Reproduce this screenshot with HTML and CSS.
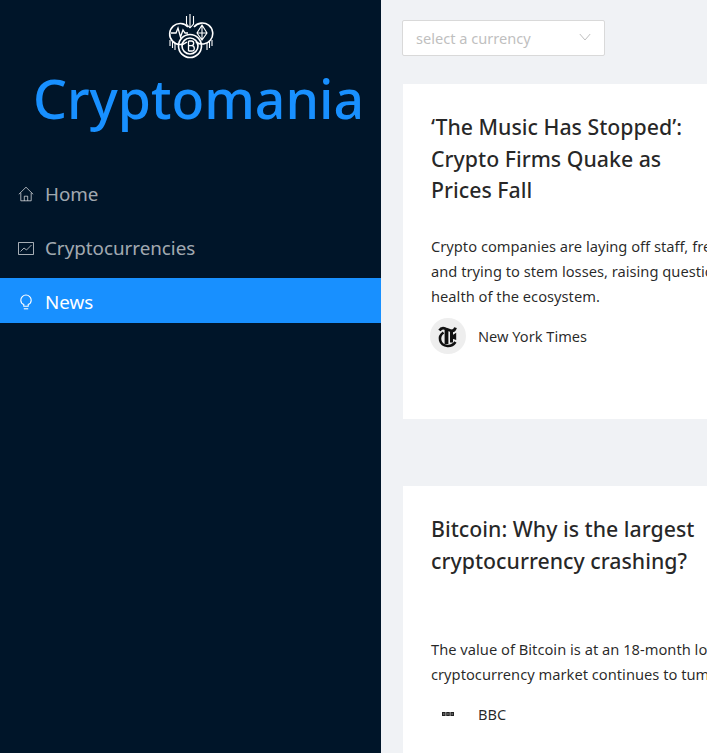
FILE: index.html
```html
<!DOCTYPE html>
<html lang="en">
  <head>
    <meta charset="UTF-8" />
    <meta name="viewport" content="width=device-width, initial-scale=1.0" />
    <title>Cryptomania</title>
    <link rel="stylesheet" href="styles.css">
  </head>
  <body>
    <aside class="sidebar">
      <div class="logo-wrap">
        <svg class="logo" viewBox="0 0 46 46" fill="none" stroke="#fff" stroke-width="1.6">
          <path d="M19 29A10.500 10.500 0 1 1 20 14" />
          <path d="M26 14A10.500 10.500 0 1 1 28 29" />
          <circle cx="22" cy="33" r="11.500" />
          <circle cx="22" cy="33" r="8" />
          <path d="M3 20h5l2-5 2.500 9 2.500-7 2 3h3" stroke-width="1.300" />
          <path d="M34 12l-5 8 5 7 5-7zM29 20h10M34 12v15" stroke-width="1.100" />
          <path d="M22 1v14M18.500 3v8l3.500 4M25.500 3v8l-3.500 4" stroke-width="1.100" />
          <path d="M20.500 28v10M20.500 28h3q2.200 0 2.200 2.300t-2.200 2.400h-3M23.500 32.700q2.800 0 2.800 2.700t-2.800 2.600h-3" stroke-width="1.300" />
          <path d="M2 27v6M4.500 29v6M7 30v7M44 27v6M41.500 29v6M39 30v7" stroke-width="1.100" />
        </svg>
        <h1 class="brand">Cryptomania</h1>
      </div>
      <ul class="menu">
        <li class="menu-item">
          <svg class="menu-icon" viewBox="0 0 16 16" fill="none" stroke="currentColor" stroke-width="1">
            <path d="M.8 8.300 8 1.200l7.200 7.100M2.800 6.800v8h10.400v-8M6.300 14.800v-4.600h3.400v4.600" />
          </svg>
          <span>Home</span>
        </li>
        <li class="menu-item">
          <svg class="menu-icon" viewBox="0 0 16 16" fill="none" stroke="currentColor" stroke-width="1">
            <path d="M.5 2.500h15v12H.5zM2.500 11.500l3.500-3.500 2.500 2 5-5" />
          </svg>
          <span>Cryptocurrencies</span>
        </li>
        <li class="menu-item active">
          <svg class="menu-icon" viewBox="0 0 16 16" fill="none" stroke="currentColor" stroke-width="1.100">
            <path d="M5.800 12.300v-1.700C3.900 9.700 2.800 8 2.800 6.200a5.200 5.200 0 0 1 10.400 0c0 1.800-1.100 3.500-3 4.400v1.700z" />
            <path d="M5.800 14.800h4.400" />
          </svg>
          <span>News</span>
        </li>
      </ul>
    </aside>

    <main class="main">
      <div class="select">
        <span class="select-text">select a currency</span>
        <svg class="select-arrow" viewBox="0 0 12 8" fill="none" stroke="currentColor" stroke-width="1">
          <path d="M.8 1l5.200 6 5.200-6" />
        </svg>
      </div>

      <article class="card card-first">
        <h2 class="card-title">‘The Music Has Stopped’: Crypto Firms Quake as Prices Fall</h2>
        <p class="card-text">Crypto companies are laying off staff, freezing hiring and trying to stem losses, raising questions about the health of the ecosystem.</p>
        <div class="provider">
          <span class="avatar">
            <svg viewBox="0 0 36 36" width="36" height="36" fill="none" stroke="#111">
              <path d="M9.500 12.500q2-3.500 6-1.800l5.500 2q3.500.8 4.500-3" stroke-width="2.800" />
              <path d="M16.500 12v14" stroke-width="3.800" />
              <path d="M13.500 14.500q-4.500 3-3.300 8 1.300 5 7.300 5.500 5 .3 8-4" stroke-width="2.600" />
              <path d="M21.500 13v11.500" stroke-width="3" />
              <path d="M21.500 18.500l4-2.500v5l-4-1.500" fill="#111" stroke-width="1.400" />
            </svg>
          </span>
          <span class="provider-name">New York Times</span>
        </div>
      </article>

      <article class="card">
        <h2 class="card-title">Bitcoin: Why is the largest cryptocurrency crashing?</h2>
        <p class="card-text card-text-short">The value of Bitcoin is at an 18-month low as the cryptocurrency market continues to tumble.</p>
        <div class="provider">
          <span class="avatar avatar-plain">
            <svg viewBox="0 0 12 4" width="12" height="4">
              <path fill="#222" d="M0 0h3.600v4H0zM4.200 0h3.600v4H4.200zM8.400 0H12v4H8.400z" />
              <path fill="#999" d="M1 1.500h1.500v1H1zM5.200 1.500h1.500v1H5.200zM9.500 1.500H11v1H9.500z" />
            </svg>
          </span>
          <span class="provider-name">BBC</span>
        </div>
      </article>
    </main>
  </body>
</html>
```

FILE: styles.css
```css
* {
  box-sizing: border-box;
}

html,
body {
  height: 100%;
}

body {
  margin: 0;
  display: flex;
  overflow: hidden;
  font-family: "Noto Sans", "Open Sans", sans-serif;
  background-color: #f0f2f5;
  color: rgba(0, 0, 0, 0.85);
}

.sidebar {
  width: 381px;
  flex-shrink: 0;
  background-color: #001529;
}

.logo-wrap {
  display: flex;
  flex-direction: column;
  align-items: center;
  padding-top: 13px;
}

.logo {
  width: 46px;
  height: 46px;
}

.brand {
  margin: 5px 0 0 16px;
  font-size: 53.5px;
  font-weight: 500;
  line-height: 70px;
  color: #1890ff;
}

.menu {
  list-style: none;
  margin: 36px 0 0 0;
  padding: 0;
}

.menu-item {
  display: flex;
  align-items: center;
  gap: 11px;
  height: 45px;
  margin-bottom: 9px;
  padding: 2px 0 0 18px;
  font-size: 18.8px;
  color: rgba(255, 255, 255, 0.65);
}

.menu-item.active {
  background-color: #1890ff;
  color: #fff;
}

.menu-icon {
  width: 16px;
  height: 16px;
  flex-shrink: 0;
}

.main {
  flex: 1;
  min-width: 0;
  padding: 20px 0 0 21px;
}

.select {
  width: 203px;
  height: 36px;
  display: flex;
  align-items: center;
  justify-content: space-between;
  padding: 0 13px 0 13px;
  background-color: #fff;
  border: 1px solid #d9d9d9;
  border-radius: 2px;
}

.select-text {
  font-size: 14.6px;
  color: #bfbfbf;
}

.select-arrow {
  width: 12px;
  height: 8px;
  margin-bottom: 3px;
  color: #bfbfbf;
}

.card {
  width: 460px;
  height: 335px;
  margin: 28px 0 0 1px;
  padding: 27px 28px 0 28px;
  background-color: #fff;
}

.card + .card {
  margin-top: 67px;
  height: 300px;
}

.card-title {
  width: 280px;
  height: 96px;
  margin: 0;
  font-size: 21.3px;
  font-weight: 500;
  line-height: 31.5px;
}

.card-text {
  width: 384px;
  margin: 27px 0 0 0;
  font-size: 14.7px;
  line-height: 25px;
}

.card-text-short {
  margin-top: 28px;
}

.provider {
  display: flex;
  align-items: center;
  gap: 12px;
  margin-top: 9px;
  margin-left: -1px;
  font-size: 14.6px;
}

.avatar {
  width: 36px;
  height: 36px;
  display: flex;
  align-items: center;
  justify-content: center;
  border-radius: 50%;
  background-color: #eee;
}

.avatar-plain {
  background-color: transparent;
}
```
